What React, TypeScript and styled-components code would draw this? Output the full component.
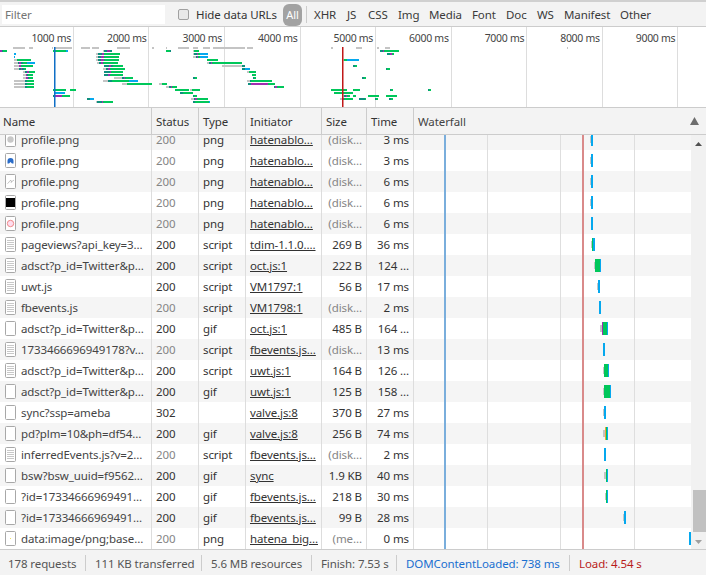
import React from "react";
import styled, { createGlobalStyle } from "styled-components";

const Global = createGlobalStyle`
  html, body { margin: 0; padding: 0; background: #fff; }
  * { box-sizing: border-box; }
`;

const C = {
  a: "#c4c4c4", t: "#0e8f7e", p: "#a02eb0", g: "#00c75a", b: "#05a8ee", o: "#f2a33a",
} as Record<string, string>;

const Page = styled.div`
  width: 706px; height: 575px; display: flex; flex-direction: column; overflow: hidden;
  font: 11.5px "Noto Sans", "Open Sans", sans-serif; letter-spacing: -0.1px; color: #333; background: #fff;
`;
const Toolbar = styled.div`
  height: 27px; flex: none; display: flex; align-items: center; background: #f3f3f3;
  border-top: 2px solid #d0d0d0; border-bottom: 1px solid #ccc; padding-left: 2px; padding-top: 1px;
`;
const FilterBox = styled.div`
  width: 163px; height: 19px; background: #fff; color: #757575; padding-left: 3px;
  line-height: 20px; flex: none;
`;
const CheckLabel = styled.label`
  display: flex; align-items: center; margin-left: 13px; width: 105px; flex: none; white-space: nowrap;
`;
const CheckBox = styled.span`
  width: 11px; height: 11px; border-radius: 2px; background: #e8e8e8; border: 1px solid #a0a0a0;
  margin-right: 7px; flex: none;
`;
const AllPill = styled.span`
  width: 19px; height: 22px; border-radius: 6px; background: #a2a2a2; color: #fff; text-align: center;
  line-height: 22px; flex: none; font-size: 11px;
`;
const Sep = styled.span`
  width: 1px; height: 17px; background: #ccc; margin: 0 7px 0 4px; flex: none;
`;
const TypeFilter = styled.span<{ $w: number }>`
  width: ${(p) => p.$w}px; flex: none; white-space: nowrap; color: #3a3a3a;
`;

const Overview = styled.div`
  height: 81px; flex: none; position: relative; border-bottom: 1px solid #ccc; background: #fff;
  display: flex;
`;
const Tick = styled.div`
  width: 75.55px; flex: none; height: 80px; border-right: 1px solid #ddd; text-align: right;
  padding: 4px 2px 0 0; white-space: nowrap; color: #444; font-size: 10.5px; letter-spacing: -0.3px;
  &:first-child { width: 73.9px; }
`;
const OverviewChart = styled.svg`
  position: absolute; left: 0; top: 0; width: 706px; height: 80px;
`;

const Head = styled.div`
  height: 27px; flex: none; display: flex; background: #f3f3f3; border-bottom: 1px solid #ccc;
`;
const HeadCell = styled.div<{ $w: number }>`
  width: ${(p) => p.$w}px; flex: none; border-right: 1px solid #ccc; padding-left: 4px; line-height: 27px;
  color: #333;
  &:first-child { padding-left: 3px; }
`;
const HeadWaterfall = styled.div`
  flex: 1; padding-left: 4px; line-height: 27px; display: flex; justify-content: space-between; color: #444;
`;
const SortArrow = styled.svg`
  width: 9px; height: 8px; margin: 9px 7px 0 0;
`;

const Body = styled.div`
  flex: 1; min-height: 0; display: flex; overflow: hidden;
`;
const RowsArea = styled.div`
  width: 691px; flex: none; position: relative; overflow: hidden;
`;
const Rows = styled.div`
  margin-top: -6px;
`;
const Row = styled.div<{ $odd: boolean }>`
  height: 21px; display: flex; background: ${(p) => (p.$odd ? "#fff" : "#f5f5f5")};
`;
const Cell = styled.div<{ $w: number; $right?: boolean; $muted?: boolean; $link?: boolean }>`
  width: ${(p) => p.$w}px; flex: none; border-right: 1px solid #ddd; padding: 0 4px; line-height: 22px;
  white-space: nowrap; overflow: hidden;
  text-align: ${(p) => (p.$right ? "right" : "left")};
  color: ${(p) => (p.$muted ? "#858585" : "#333")};
  text-decoration: ${(p) => (p.$link ? "underline" : "none")};
`;
const NameCell = styled.div`
  width: 152px; flex: none; border-right: 1px solid #ddd; padding-left: 5px; display: flex; align-items: center;
  gap: 5px; white-space: nowrap; overflow: hidden; color: #444; line-height: 22px;
`;
const FileIcon = styled.svg`
  width: 11px; height: 15px; flex: none;
`;
const WaterfallCell = styled.div`
  flex: 1; display: flex; align-items: center; min-width: 0;
`;
const Track = styled.div`
  display: flex; height: 13px;
`;
const Seg = styled.span<{ $c: string }>`
  height: 100%; background: ${(p) => p.$c};
  &[data-wait="1"] { height: 7px; margin-top: 3px; }
`;
const Marker = styled.div<{ $c: string; $x: number }>`
  position: absolute; top: 0; bottom: 0; left: ${(p) => p.$x}px; width: ${(p) => (p.$c === "g" ? 1 : 2)}px;
  background: ${(p) => (p.$c === "b" ? "#7aaedc" : p.$c === "r" ? "#d98a8a" : "#dedede")};
`;

const Scrollbar = styled.div`
  flex: 1; background: #f1f1f1; display: flex; flex-direction: column; align-items: flex-end; padding-top: 4px;
`;
const ScrollArrow = styled.svg`
  width: 7px; height: 4px; margin: 3px 4px 0 0; flex: none;
`;
const Thumb = styled.div`
  width: 13px; height: 42px; background: #c1c1c1; margin-top: auto; flex: none;
`;
const ScrollEnd = styled.div`
  height: 17px; flex: none; display: flex; align-items: center; align-self: flex-end;
`;

const StatusBar = styled.div`
  height: 26px; flex: none; background: #f3f3f3; border-top: 1px solid #ccc; display: flex; align-items: center;
  padding-left: 8px; padding-top: 1px; white-space: nowrap; color: #555;
`;
const StatusItem = styled.span<{ $w: number; $c?: string }>`
  width: ${(p) => p.$w}px; flex: none; color: ${(p) => p.$c ?? "#555"};
`;
const StatusSep = styled.span`
  width: 1px; height: 16px; background: #ccc; margin: 0 9px; flex: none;
`;

const filters: [string, number][] = [
  ["XHR", 33], ["JS", 21], ["CSS", 30], ["Img", 31], ["Media", 43], ["Font", 34], ["Doc", 31],
  ["WS", 27], ["Manifest", 56], ["Other", 32],
];
const ticks = [1000, 2000, 3000, 4000, 5000, 6000, 7000, 8000, 9000];

type Bar = [number, string];
const overview: Bar[][] = [
  [[13,"a12"],[29,"a4"],[52,"a1"],[55,"a17"],[81,"a9"],[92,"a7"],[117,"a13"],[152,"a2"],[166,"a1"],[178,"a11"],[193,"a5"],[203,"a7"],[213,"a32"],[247,"a6"],[331,"a2"],[356,"a6"],[377,"a2"],[385,"a5"],[567,"a1"]],
  [[0,"p2 t1 g4"],[53,"g13 b2"],[103,"a1 t3 p3 t2"],[166,"g4 t1"],[193,"a1 g5"],[380,"t3 p1 g15"]],
  [[14,"b2"],[96,"a2 t4 p2 g16"],[193,"a1 t3 p1 g2 b8"],[387,"t3 p2 g2"]],
  [[14,"b1"],[96,"a2 t3 p3 g15"],[193,"a3 t1 p1 g2 b8"]],
  [[14,"a3 g14"],[96,"a2 t3 p3 g15"],[207,"g11"],[343,"a1 g3 b12"]],
  [[14,"a4 t1 p2 t2 g4 b8"],[97,"a2 t2 p2 g15"],[207,"a2 t2 p1 g30"]],
  [[14,"a5 p2 g12"],[104,"t5 p2 t2 g10"],[222,"a20 t3"],[353,"t2 g2"]],
  [[14,"a5 t2 p1 t2 g2"],[103,"a3 t2 p2 g15"],[242,"t3 b5"],[386,"t1 g3"]],
  [[23,"a2 t2 p2 g6"],[104,"t6 p1 g12"],[247,"a2 g7"]],
  [[23,"a3 p1 t1 g5"],[104,"t4 p2 g13"],[252,"g4"]],
  [[23,"a3 p2 t1 g4"],[114,"a8 t2 p1 g8"],[193,"t2 g2"],[253,"t1 g2"],[362,"t2 g2"]],
  [[14,"a11 t2 g7"],[103,"a5 t4 g17 b9"],[247,"a3 t1 g21"]],
  [[14,"a11 t2 g7"],[122,"a5 g25"],[159,"a3 g5"],[248,"t3 p17 g7"]],
  [[14,"a11 t2 g7"],[166,"a3 t2 p1 g5"],[274,"t1 p2 g7"]],
  [[53,"g13"],[70,"g6"],[175,"g14"],[190,"a2 g8"],[331,"g16"],[353,"g7"],[390,"t1 g2"],[428,"t1 g2"]],
  [[54,"g1 b10"],[180,"t3 g10"],[334,"g19"]],
  [[53,"t1 p7 p1 g8"],[193,"t1 g3"],[342,"a2 t2 p1 g3"],[353,"g3"],[368,"g11"],[386,"g11"]],
  [[87,"t3 b4"],[191,"a3 t1 p2 g11"],[340,"a3 p1 g9"],[359,"t6 g1"],[375,"t1 g2"],[389,"t2 g2"]],
  [[96,"a1 t5 p1 g10"],[193,"t2 g14 b1"]],
];

type Kind = "grey" | "blue" | "sig" | "black" | "red" | "doc" | "blank" | "dot";
type R = {
  kind: Kind; name: string; status: string; type: string; init: string; size: string; time: string;
  at: number; segs: string; cached?: boolean;
};

const rows: R[] = [
  { kind: "grey", name: "profile.png", status: "200", type: "png", init: "hatenablo…", size: "(disk…", time: "3 ms", at: 176, segs: "a1 b2", cached: true },
  { kind: "blue", name: "profile.png", status: "200", type: "png", init: "hatenablo…", size: "(disk…", time: "3 ms", at: 176, segs: "a1 b2", cached: true },
  { kind: "sig", name: "profile.png", status: "200", type: "png", init: "hatenablo…", size: "(disk…", time: "6 ms", at: 176, segs: "a1 b2", cached: true },
  { kind: "black", name: "profile.png", status: "200", type: "png", init: "hatenablo…", size: "(disk…", time: "6 ms", at: 176, segs: "a1 b2", cached: true },
  { kind: "red", name: "profile.png", status: "200", type: "png", init: "hatenablo…", size: "(disk…", time: "6 ms", at: 177, segs: "b2", cached: true },
  { kind: "doc", name: "pageviews?api_key=3…", status: "200", type: "script", init: "tdim-1.1.0.…", size: "269 B", time: "36 ms", at: 177, segs: "a1 g1 b2" },
  { kind: "doc", name: "adsct?p_id=Twitter&p…", status: "200", type: "script", init: "oct.js:1", size: "222 B", time: "124 …", at: 180, segs: "a1 g5 b1" },
  { kind: "doc", name: "uwt.js", status: "200", type: "script", init: "VM1797:1", size: "56 B", time: "17 ms", at: 183, segs: "a1 b2" },
  { kind: "doc", name: "fbevents.js", status: "200", type: "script", init: "VM1798:1", size: "(disk…", time: "2 ms", at: 185, segs: "b2", cached: true },
  { kind: "blank", name: "adsct?p_id=Twitter&p…", status: "200", type: "gif", init: "oct.js:1", size: "485 B", time: "164 …", at: 186, segs: "a2 p1 g4 b1" },
  { kind: "doc", name: "1733466696949178?v…", status: "200", type: "script", init: "fbevents.js…", size: "(disk…", time: "13 ms", at: 189, segs: "b2", cached: true },
  { kind: "doc", name: "adsct?p_id=Twitter&p…", status: "200", type: "script", init: "uwt.js:1", size: "164 B", time: "126 …", at: 189, segs: "a1 g4 b1" },
  { kind: "blank", name: "adsct?p_id=Twitter&p…", status: "200", type: "gif", init: "uwt.js:1", size: "125 B", time: "158 …", at: 189, segs: "a1 g6 b1" },
  { kind: "blank", name: "sync?ssp=ameba", status: "302", type: "", init: "valve.js:8", size: "370 B", time: "27 ms", at: 189, segs: "a1 b2" },
  { kind: "blank", name: "pd?plm=10&ph=df54…", status: "200", type: "gif", init: "valve.js:8", size: "256 B", time: "74 ms", at: 189, segs: "a2 o1 g1 b1" },
  { kind: "doc", name: "inferredEvents.js?v=2…", status: "200", type: "script", init: "fbevents.js…", size: "(disk…", time: "2 ms", at: 190, segs: "b2", cached: true },
  { kind: "blank", name: "bsw?bsw_uuid=f9562…", status: "200", type: "gif", init: "sync", size: "1.9 KB", time: "40 ms", at: 190, segs: "a2 g1 b1" },
  { kind: "blank", name: "?id=17334666969491…", status: "200", type: "gif", init: "fbevents.js…", size: "218 B", time: "30 ms", at: 191, segs: "a1 g1 b1" },
  { kind: "blank", name: "?id=17334666969491…", status: "200", type: "gif", init: "fbevents.js…", size: "99 B", time: "28 ms", at: 209, segs: "a1 b2" },
  { kind: "dot", name: "data:image/png;base…", status: "200", type: "png", init: "hatena_big…", size: "(me…", time: "0 ms", at: 275, segs: "b2", cached: true },
];

const parse = (s: string) => s.split(" ").map((p) => ({ k: p[0], n: Number(p.slice(1)) }));

function Icon({ kind }: { kind: Kind }) {
  return (
    <FileIcon viewBox="0 0 11 15">
      <rect x=".5" y=".5" width="10" height="14" rx="1" fill="#fff" stroke="#a8a8a8" />
      {kind === "doc" && (
        <path d="M2 3.500h7M2 5.500h7M2 7.500h7M2 9.500h7M2 11.500h7" stroke="#c8c8c8" strokeWidth="1" />
      )}
      {kind === "grey" && <circle cx="5.5" cy="7.5" r="3.200" fill="#c8c8c8" />}
      {kind === "blue" && <path d="M2.500 10.500V8a3 3 0 0 1 6 0v2.500H7L5.500 9 4 10.500z" fill="#2a6cc8" />}
      {kind === "sig" && <path d="M2.500 9.500c2-1 2-3.500 3.500-3S5 9.500 6.500 8 8 7 9 6" fill="none" stroke="#aaa" strokeWidth=".8" />}
      {kind === "black" && <rect x="1" y="3" width="9" height="9" fill="#000" />}
      {kind === "red" && <circle cx="5.5" cy="7.5" r="3.200" fill="#fde" stroke="#e88" strokeWidth="1" />}
      {kind === "dot" && <rect x="5" y="7" width="1" height="1" fill="#f0e060" />}
    </FileIcon>
  );
}

export default function App() {
  return (
    <Page>
      <Global />
      <Toolbar>
        <FilterBox>Filter</FilterBox>
        <CheckLabel>
          <CheckBox />
          Hide data URLs
        </CheckLabel>
        <AllPill>All</AllPill>
        <Sep />
        {filters.map(([f, w]) => (
          <TypeFilter key={f} $w={w}>{f}</TypeFilter>
        ))}
      </Toolbar>
      <Overview>
        {ticks.map((t) => (
          <Tick key={t}>{t} ms</Tick>
        ))}
        <OverviewChart viewBox="0 0 706 80">
          {overview.map((bars, i) =>
            bars.map(([x, spec], j) => {
              let cx = x;
              return parse(spec).map((s, k) => {
                const el = <rect key={`${i}-${j}-${k}`} x={cx} y={20 + 3 * i} width={s.n} height={2} fill={C[s.k]} />;
                cx += s.n;
                return el;
              });
            })
          )}
          <rect x="54" y="20" width="1.500" height="60" fill="#0f6fc6" />
          <rect x="342" y="20" width="1.500" height="60" fill="#c01818" />
        </OverviewChart>
      </Overview>
      <Head>
        <HeadCell $w={152}>Name</HeadCell>
        <HeadCell $w={47}>Status</HeadCell>
        <HeadCell $w={47}>Type</HeadCell>
        <HeadCell $w={76}>Initiator</HeadCell>
        <HeadCell $w={45}>Size</HeadCell>
        <HeadCell $w={47}>Time</HeadCell>
        <HeadWaterfall>
          Waterfall
          <SortArrow viewBox="0 0 9 8"><path d="M4.500 0L9 8H0z" fill="#6e6e6e" /></SortArrow>
        </HeadWaterfall>
      </Head>
      <Body>
        <RowsArea>
          <Rows>
            {rows.map((r, i) => (
              <Row key={i} $odd={i % 2 === 1}>
                <NameCell>
                  <Icon kind={r.kind} />
                  {r.name}
                </NameCell>
                <Cell $w={47} $muted={r.cached}>{r.status}</Cell>
                <Cell $w={47}>{r.type}</Cell>
                <Cell $w={76} $link>{r.init}</Cell>
                <Cell $w={45} $right $muted={r.cached}>{r.size}</Cell>
                <Cell $w={47} $right>{r.time}</Cell>
                <WaterfallCell>
                  <Track style={{ marginLeft: r.at }}>
                    {parse(r.segs).map((s, k) => (
                      <Seg key={k} $c={C[s.k]} data-wait={s.k === "a" ? "1" : "0"} style={{ width: s.n }} />
                    ))}
                  </Track>
                </WaterfallCell>
              </Row>
            ))}
          </Rows>
          <Marker $c="g" $x={487} />
          <Marker $c="g" $x={560} />
          <Marker $c="g" $x={634} />
          <Marker $c="b" $x={444} />
          <Marker $c="r" $x={582} />
        </RowsArea>
        <Scrollbar>
          <ScrollArrow viewBox="0 0 7 4"><path d="M3.500 0L7 4H0z" fill="#505050" /></ScrollArrow>
          <Thumb />
          <ScrollEnd>
            <ScrollArrow viewBox="0 0 7 4"><path d="M0 0h7L3.500 4z" fill="#a0a0a0" /></ScrollArrow>
          </ScrollEnd>
        </Scrollbar>
      </Body>
      <StatusBar>
        <StatusItem $w={68}>178 requests</StatusItem>
        <StatusSep />
        <StatusItem $w={97}>111 KB transferred</StatusItem>
        <StatusSep />
        <StatusItem $w={91}>5.6 MB resources</StatusItem>
        <StatusSep />
        <StatusItem $w={66}>Finish: 7.53 s</StatusItem>
        <StatusSep />
        <StatusItem $w={154} $c="#1a6fd0">DOMContentLoaded: 738 ms</StatusItem>
        <StatusSep />
        <StatusItem $w={62} $c="#b81c1c">Load: 4.54 s</StatusItem>
      </StatusBar>
    </Page>
  );
}
